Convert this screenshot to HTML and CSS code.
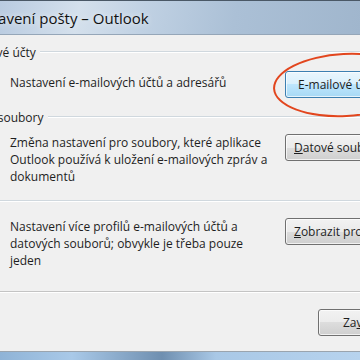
FILE: index.html
```html
<!DOCTYPE html>
<html lang="cs">
<head>
    <meta charset="UTF-8">
    <meta name="viewport" content="width=device-width, initial-scale=1.0">
    <title>Nastavení pošty – Outlook</title>
    <link rel="stylesheet" href="styles.css">
</head>
<body>
    <div class="window">
        <div class="titlebar">
            <span class="title">Nastavení pošty – Outlook</span>
        </div>

        <div class="client">
            <!-- e-mailové účty -->
            <div class="group">
                <div class="legend"><span>E-mailové účty</span></div>
                <div class="row row-accounts">
                    <p>Nastavení e-mailových účtů a adresářů</p>
                    <div class="btn-wrap">
                        <button class="btn btn-hot">E-mailové účty...</button>
                        <span class="ring"></span>
                    </div>
                </div>
            </div>

            <!-- datové soubory -->
            <div class="group">
                <div class="legend"><span>Datové soubory</span></div>
                <div class="row row-files">
                    <p>Změna nastavení pro soubory, které aplikace Outlook používá k uložení e-mailových zpráv a dokumentů</p>
                    <button class="btn"><u>D</u>atové soubory...</button>
                </div>
            </div>

            <div class="sep"></div>

            <!-- profily -->
            <div class="row row-profiles">
                <p>Nastavení více profilů e-mailových účtů a datových souborů; obvykle je třeba pouze jeden</p>
                <button class="btn"><u>Z</u>obrazit profily...</button>
            </div>

            <div class="sep sep-dark"></div>

            <div class="footer">
                <button class="btn btn-close">Za<u>v</u>řít</button>
            </div>
        </div>

        <div class="frame-bottom"></div>
    </div>
</body>
</html>
```

FILE: styles.css
```css
body {
    margin: 0;
    padding: 0;
    width: 360px;
    height: 360px;
    overflow: hidden;
    background-color: #f0f0f0;
    font-family: 'Open Sans', 'Noto Sans', sans-serif;
    font-size: 12px;
    color: #1e1e1e;
}
.window {
    width: 360px;
    height: 360px;
    display: flex;
    flex-direction: column;
}
.titlebar {
    height: 33px;
    flex: none;
    border-top: 1px solid #4a5866;
    border-bottom: 1px solid #95a6b8;
    background: linear-gradient(100deg, #b9cbe0 0%, #d4e0ec 22%, #c0d1e3 40%, #abc0d6 65%, #a0b6cd 100%);
    display: flex;
    align-items: center;
    overflow: hidden;
}
.title {
    font-size: 15px;
    margin-left: -34px;
    white-space: nowrap;
    color: #111;
    text-shadow: 0 0 6px rgba(255, 255, 255, 0.8);
}
.client {
    flex: 1;
    display: flex;
    flex-direction: column;
    background-color: #f0f0f0;
    padding-top: 8px;
}
.legend {
    display: flex;
    align-items: center;
    margin-left: -45px;
    height: 18px;
}
.legend span {
    white-space: nowrap;
    padding-right: 4px;
}
.legend::after {
    content: "";
    flex: 1;
    border-top: 1px solid #d0d8de;
    border-bottom: 1px solid #fff;
}
.row {
    display: flex;
    align-items: flex-start;
    padding-left: 10px;
    white-space: nowrap;
}
.row p {
    margin: 0;
    width: 265px;
    flex: none;
    white-space: normal;
    line-height: 17px;
    padding-right: 10px;
}
.row-accounts {
    height: 47px;
    align-items: center;
}
.row-accounts p {
    margin-top: -5px;
}
.row-files {
    padding-top: 8px;
    height: 66px;
}
.row-files .btn {
    margin-top: 0;
}
.row-profiles {
    padding-top: 16px;
    height: 73px;
}
.row-profiles p {
    margin-top: 0;
}
.sep {
    height: 0;
    border-top: 1px solid #d0d8de;
    border-bottom: 1px solid #fff;
}
.sep-dark {
    border-top-color: #c4c4c4;
}
.btn {
    font-family: inherit;
    font-size: 12px;
    color: #1e1e1e;
    height: 27px;
    padding: 0 0 0 8px;
    text-align: left;
    width: 140px;
    flex: none;
    border: 1px solid #707070;
    border-radius: 3px;
    background: linear-gradient(#f2f2f2 0%, #ebebeb 50%, #dddddd 50%, #cfcfcf 100%);
    box-shadow: inset 0 0 0 1px rgba(255, 255, 255, 0.7);
    white-space: nowrap;
}
.btn-wrap {
    position: relative;
    flex: none;
}
.btn-hot {
    padding-left: 12px;
    border-color: #3c7fb1;
    background: linear-gradient(#eaf6fd 0%, #d9f0fc 50%, #bee6fd 50%, #a7d9f5 100%);
}
.ring {
    position: absolute;
    left: -12px;
    top: -18px;
    width: 140px;
    height: 60px;
    border: 2px solid #e2461e;
    border-radius: 50%;
    transform: rotate(-3deg);
}
.footer {
    flex: 1;
    display: flex;
    justify-content: flex-start;
    padding-left: 318px;
    padding-top: 16px;
}
.btn-close {
    width: 80px;
    padding-left: 24px;
}
.frame-bottom {
    height: 8px;
    flex: none;
    border-top: 1px solid #9aa4ae;
    background: linear-gradient(90deg, #8fb3d6 0%, #a9c9e8 20%, #6f8fb0 45%, #a9c8e6 60%, #b7d3ee 100%);
}
```
